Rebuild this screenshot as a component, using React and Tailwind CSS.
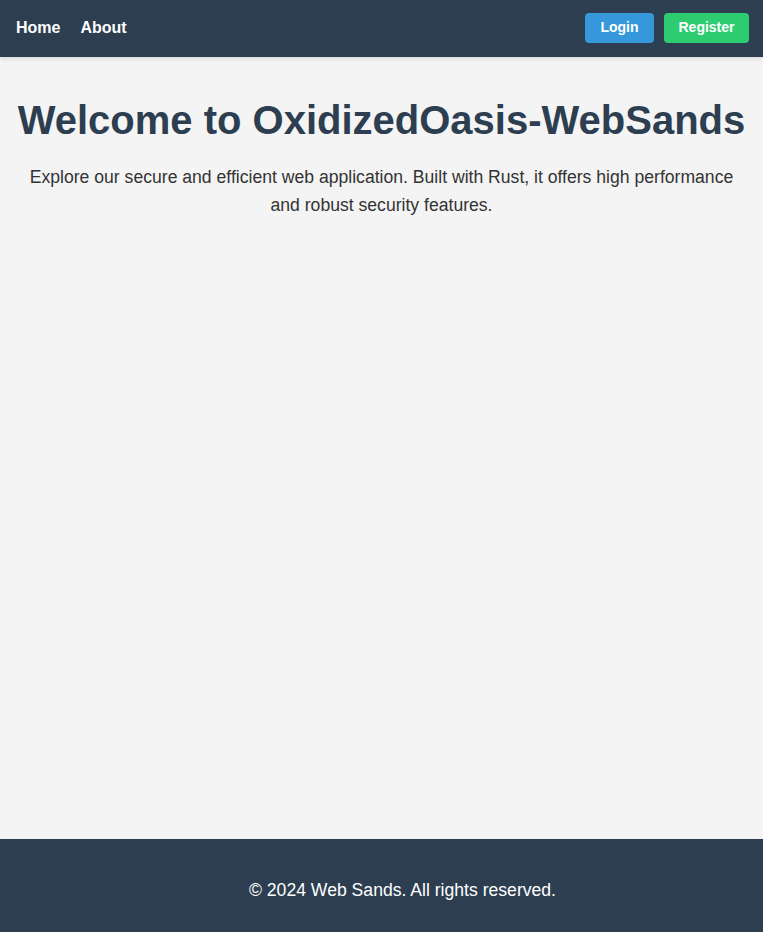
export default function App() {
  return (
    <div className="flex min-h-screen flex-col bg-[#f4f4f4] font-['Liberation_Sans',Arial,sans-serif]">
      <header className="relative z-10 flex h-[57px] items-center justify-between bg-[#2c3e50] pl-4 pr-[14px] shadow-[0_2px_4px_rgba(0,0,0,0.1)]">
        <nav className="-mt-px flex items-center gap-5 text-[16px] font-bold text-white">
          <a href="#">Home</a>
          <a href="#">About</a>
        </nav>
        <div className="-mt-[2px] flex items-center gap-[10px]">
          <button className="h-[30px] w-[69px] rounded-[4px] bg-[#3498db] text-[14px] font-bold text-white">Login</button>
          <button className="h-[30px] w-[85px] rounded-[4px] bg-[#2ecc71] text-[14px] font-bold text-white">Register</button>
        </div>
      </header>
      <main className="flex-1 px-4 pt-[40px] text-center">
        <h1 className="text-[40px] leading-[46px] font-bold text-[#2c3e50]">Welcome to OxidizedOasis-WebSands</h1>
        <p className="mx-auto mt-[20px] text-[17.6px] leading-[28px] text-[#333]">
          Explore our secure and efficient web application. Built with Rust, it offers high performance and robust security features.
        </p>
      </main>
      <footer className="h-[93px] bg-[#2c3e50] pl-[42px] pt-[39px] text-center text-[17.6px] leading-[24px] text-white">
        © 2024 Web Sands. All rights reserved.
      </footer>
    </div>
  );
}
